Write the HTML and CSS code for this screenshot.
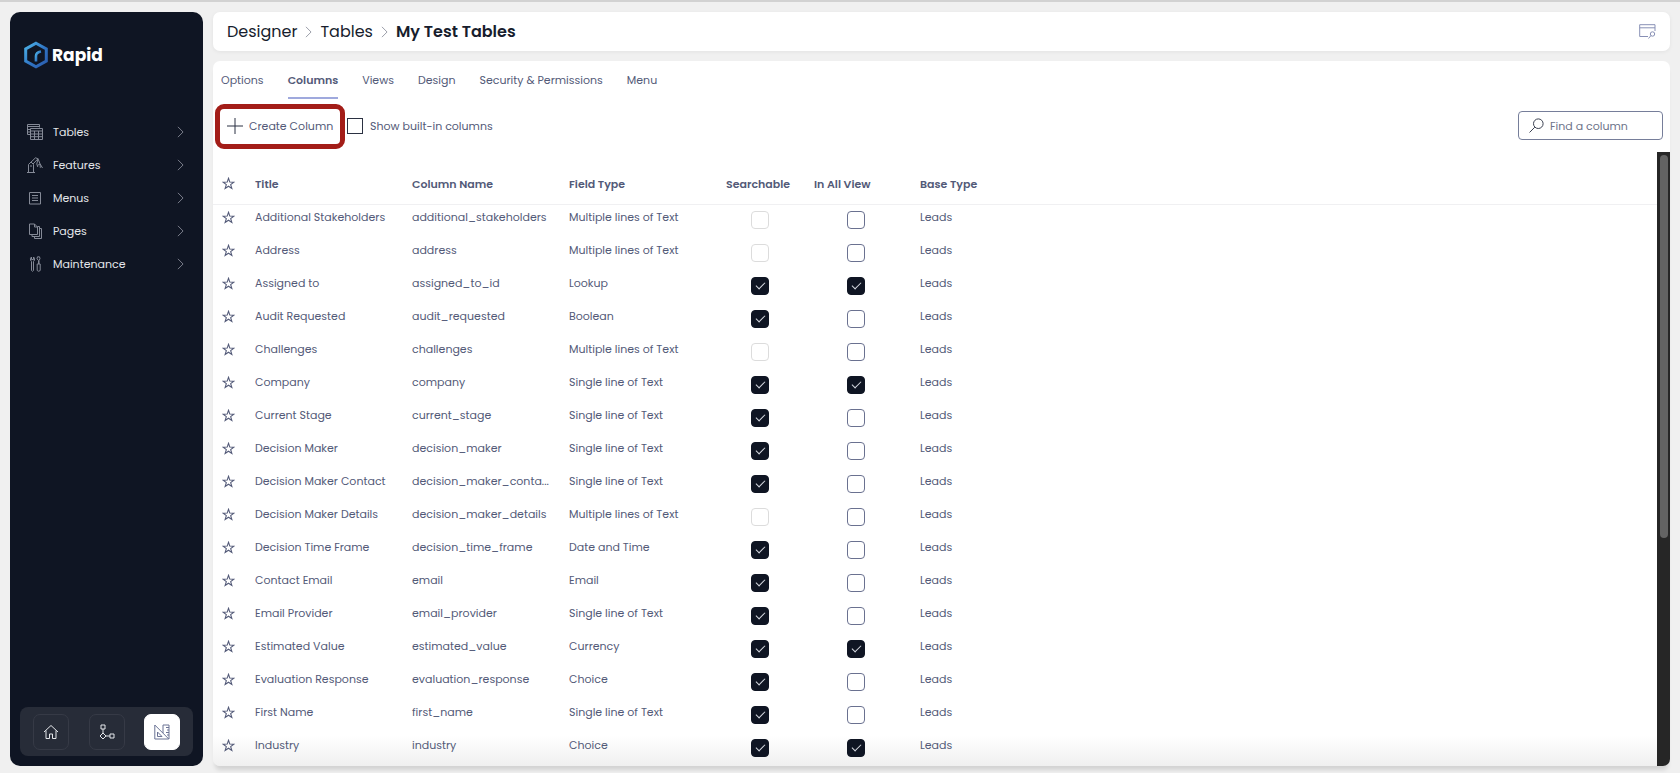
FILE: index.html
```
<!DOCTYPE html>
<html lang="en">
<head>
<meta charset="utf-8">
<title>Rapid – My Test Tables</title>
<link rel="stylesheet" href="styles.css">
</head>
<body>
<svg class="defs" width="0" height="0" aria-hidden="true">
  <symbol id="chevron" viewBox="0 0 8 14"><path d="M1 1l6 6-6 6"/></symbol>
  <symbol id="star" viewBox="0 0 12 12"><path d="M6 1.200l1.200 3.500 3.700.1-2.900 2.200 1.100 3.500L6 8.500l-3.100 2 1.100-3.500L1.100 4.800l3.700-.1z"/></symbol>
</svg>
<div class="app">
  <aside class="sidebar">
    <a class="logo" href="#">
      <svg width="24" height="28" viewBox="0 0 24 28" fill="none">
        <defs><linearGradient id="lg" x1="0" y1="0" x2="1" y2="1"><stop offset="0" stop-color="#4db4e8"/><stop offset=".55" stop-color="#2f74c4"/><stop offset="1" stop-color="#2b5cae"/></linearGradient></defs>
        <path d="M12 2.200L22.300 8v12L12 25.800 1.700 20V8z" stroke="url(#lg)" stroke-width="3"/>
        <path d="M12 20.500v-5.500q0-3.500 5-4.500" stroke="url(#lg)" stroke-width="2.600"/>
      </svg>
      <span>Rapid</span>
    </a>
    <nav class="menu">
      <a href="#"><svg class="ico" viewBox="0 0 16 16"><path d="M3.500 10.500h-3v-10h12v3M.5 2.500h12M.5 5.500h3M.5 8h3M3.500 4.500h12v11h-12zM3.500 7h12M3.500 10h12M3.500 12.700h12M7.500 7v8.500M11.500 7v8.500"/></svg><span>Tables</span><svg class="chev"><use href="#chevron"/></svg></a>
      <a href="#"><svg class="ico" viewBox="0 0 16 16"><path d="M0 15.500h8M1.500 15.500V7.500L4 5l2.500 2.500v8M3 9h2M2.500 6.500L8.500.8l2.500 1L6 7M11 1.800l2 5 2.500 4.200M11 1.800L9.800 7l1 3M13 6.800l-2.500 1.700M13 6.800l.3 4"/></svg><span>Features</span><svg class="chev"><use href="#chevron"/></svg></a>
      <a href="#"><svg class="ico" viewBox="0 0 16 16"><path d="M2.500 2.500h11v11.500h-11zM5 5.500h6M5 8h6M5 10.500h6"/></svg><span>Menus</span><svg class="chev"><use href="#chevron"/></svg></a>
      <a href="#"><svg class="ico" viewBox="0 0 16 16"><path d="M2.500 1h5l3 3v7.500h-8zM7.500 1v3h3M10.500 3.500h2v10h-7.500v-2M12.500 5.500h2v10H7.500v-2"/></svg><span>Pages</span><svg class="chev"><use href="#chevron"/></svg></a>
      <a href="#"><svg class="ico" viewBox="0 0 16 16"><path d="M4.500 1v2.500h2V1Q8 2 7.500 4L6.500 5.500v9q-1 1.500-2 0v-9L3.500 4Q3 2 4.500 1zM10.500.8h2l.5 2-1 1.700v3.500M10.500.8l-.5 2 1.500 1.700V8M10.200 8h3v6.500q-1.500 1.500-3 0z"/></svg><span>Maintenance</span><svg class="chev"><use href="#chevron"/></svg></a>
    </nav>
    <div class="dock">
      <button type="button" aria-label="Home"><svg viewBox="0 0 16 16"><path d="M1 8l7-6.500L15 8M3 6.500v8h3.500V10h3v4.500H13v-8"/></svg></button>
      <button type="button" aria-label="Workflow"><svg viewBox="0 0 16 16"><path d="M2 1h4v4H2zM4 5v4M4 9l3 3-3 3-3-3zM7 12h4M11 10h4v4h-4z"/></svg></button>
      <button type="button" class="on" aria-label="Designer"><svg viewBox="0 0 16 16"><path d="M.8 1v14h14zM3.500 8v4.500H8zM9 9V1h6v14M15 3.500h-3M15 6h-2M15 8.500h-3M15 11h-2"/></svg></button>
    </div>
  </aside>
  <div class="content">
    <header class="card topbar">
      <nav class="crumbs"><a href="#">Designer</a><svg class="chev"><use href="#chevron"/></svg><a href="#">Tables</a><svg class="chev"><use href="#chevron"/></svg><strong>My Test Tables</strong></nav>
      <button type="button" class="preview" aria-label="Preview"><svg width="17" height="15" viewBox="0 0 17 15"><path d="M9 12.500H.7V.7h15.300V7M.7 3.800h15.300M12 11.500L9.500 14.500"/><circle cx="13.500" cy="10" r="2.200"/></svg></button>
    </header>
    <main class="card panel">
      <nav class="tabs">
        <a href="#">Options</a><a href="#" class="active">Columns</a><a href="#">Views</a><a href="#">Design</a><a href="#">Security &amp; Permissions</a><a href="#">Menu</a>
      </nav>
      <div class="tools">
        <button type="button" class="create"><svg width="16" height="16" viewBox="0 0 16 16"><path d="M8 0v16M0 8h16"/></svg>Create Column</button>
        <label class="builtin"><input type="checkbox">Show built-in columns</label>
        <label class="search"><svg width="15" height="15" viewBox="0 0 15 15"><circle cx="9.300" cy="5.700" r="4.800"/><path d="M5.800 9.200L.5 14.500"/></svg><input type="text" placeholder="Find a column" aria-label="Find a column"></label>
      </div>
      <div class="grid">
        <div class="scroll">
          <table>
            <colgroup><col class="c-star"><col class="c-text"><col class="c-text"><col class="c-text"><col class="c-search"><col class="c-view"><col></colgroup>
            <thead><tr><th><svg class="star"><use href="#star"/></svg></th><th>Title</th><th>Column Name</th><th>Field Type</th><th>Searchable</th><th>In All View</th><th>Base Type</th></tr></thead>
            <tbody id="rows"></tbody>
          </table>
        </div>
        <div class="bar"><div class="thumb"></div></div>
      </div>
    </main>
  </div>
</div>
<script src="app.js"></script>
</body>
</html>
```
FILE: app.js
```
const M = "Multiple lines of Text", S = "Single line of Text";
// title, column name, field type, searchable, in all view
const columns = [
  ["Additional Stakeholders", "additional_stakeholders", M, 0, 0],
  ["Address", "address", M, 0, 0],
  ["Assigned to", "assigned_to_id", "Lookup", 1, 1],
  ["Audit Requested", "audit_requested", "Boolean", 1, 0],
  ["Challenges", "challenges", M, 0, 0],
  ["Company", "company", S, 1, 1],
  ["Current Stage", "current_stage", S, 1, 0],
  ["Decision Maker", "decision_maker", S, 1, 0],
  ["Decision Maker Contact", "decision_maker_conta...", S, 1, 0],
  ["Decision Maker Details", "decision_maker_details", M, 0, 0],
  ["Decision Time Frame", "decision_time_frame", "Date and Time", 1, 0],
  ["Contact Email", "email", "Email", 1, 0],
  ["Email Provider", "email_provider", S, 1, 0],
  ["Estimated Value", "estimated_value", "Currency", 1, 1],
  ["Evaluation Response", "evaluation_response", "Choice", 1, 0],
  ["First Name", "first_name", S, 1, 0],
  ["Industry", "industry", "Choice", 1, 1]
];
document.getElementById("rows").innerHTML = columns.map(([title, name, type, search, view]) => `
  <tr>
    <td><svg class="star"><use href="#star"/></svg></td>
    <td>${title}</td><td>${name}</td><td>${type}</td>
    <td class="check"><input type="checkbox" aria-label="${title} searchable" ${search ? "checked" : "disabled"}></td>
    <td class="check view"><input type="checkbox" aria-label="${title} in all view" ${view ? "checked" : ""}></td>
    <td>Leads</td>
  </tr>`).join("");
```
FILE: styles.css
```
* { box-sizing: border-box; }
body {
  margin: 0;
  height: 100vh;
  overflow: hidden;
  background: #f0f0f0;
  color: #535a78;
  font: 11px/16px Poppins, Inter, "Open Sans", sans-serif;
}
a { color: inherit; text-decoration: none; }
button, input { font: inherit; color: inherit; }
svg { fill: none; stroke: currentColor; flex: none; }
.defs { position: absolute; }

.app {
  display: flex;
  gap: 10px;
  height: 100%;
  padding: 10px 10px 7px;
  border-top: 2px solid #d2d2d2;
}

.sidebar {
  display: flex;
  flex-direction: column;
  width: 193px;
  flex: none;
  padding: 29px 10px 10px;
  border-radius: 10px;
  background: #0f1523;
  color: #e4e6ea;
}
.logo {
  display: flex;
  align-items: center;
  gap: 4px;
  padding-left: 4px;
  color: #fff;
  font-size: 17px;
  font-weight: 700;
  line-height: 28px;
}
.logo svg { stroke: none; }
.menu { margin-top: 46px; }
.menu a {
  display: flex;
  align-items: center;
  gap: 10px;
  height: 33px;
  padding: 0 9px 0 7px;
}
.menu span { flex: 1; }
.ico { width: 16px; height: 16px; color: #858a97; }
.chev { width: 7px; height: 12px; color: #8b8f9c; }
.dock {
  display: flex;
  justify-content: space-between;
  margin-top: auto;
  padding: 7px 13px 6px;
  border-radius: 8px;
  background: #272c38;
}
.dock button {
  display: grid;
  place-items: center;
  width: 36px;
  height: 36px;
  padding: 0;
  border: 1px solid #363a46;
  border-radius: 7px;
  background: transparent;
  color: #e4e6ea;
}
.dock svg { width: 16px; height: 16px; }
.dock .on { background: #fff; border-color: #fff; color: #6a7294; }

.content {
  display: flex;
  flex-direction: column;
  flex: 1;
  min-width: 0;
  gap: 10px;
}
.card { border-radius: 7px; background: #fff; box-shadow: 0 1px 4px rgba(0, 0, 0, .06); }
.topbar {
  display: flex;
  align-items: center;
  justify-content: space-between;
  padding: 0 14px;
  height: 39px;
}
.crumbs {
  display: flex;
  align-items: center;
  gap: 8px;
  color: #171d2d;
  font-size: 16px;
  line-height: 24px;
}
.crumbs strong { font-weight: 600; }
.preview { display: grid; padding: 0; border: 0; background: none; color: #8890b5; }

.panel {
  display: flex;
  flex-direction: column;
  flex: 1;
  min-height: 0;
  overflow: hidden;
  background: linear-gradient(to top, #f0f0f0, #fff 30px);
  box-shadow: 0 6px 4px -2px rgba(0, 0, 0, .12);
}
.tabs { display: flex; gap: 24px; padding: 11px 8px 0; }
.tabs a { padding-bottom: 9px; border-bottom: 2px solid transparent; }
.tabs .active { border-color: #9fa9dd; font-weight: 600; }

.tools { display: flex; align-items: center; padding: 5px 7px 0 2px; }
.create {
  display: flex;
  align-items: center;
  gap: 6px;
  width: 130px;
  height: 45px;
  padding: 0 0 2px 7px;
  border: 5px solid #a31d18;
  border-radius: 9px;
  background: #fff;
  white-space: nowrap;
}
.create svg { color: #2b3142; }
.builtin { display: flex; align-items: center; gap: 7px; padding: 0 0 2px 2px; }
.builtin input {
  appearance: none;
  width: 16px;
  height: 16px;
  margin: 0;
  border: 1px solid #2b3142;
}
.search {
  display: flex;
  align-items: center;
  gap: 6px;
  width: 145px;
  height: 29px;
  margin: 0 0 2px auto;
  padding: 0 10px;
  border: 1px solid #767e9a;
  border-radius: 4px;
}
.search svg { color: #3c4252; }
.search input { width: 100%; min-width: 0; padding: 0; border: 0; outline: 0; background: none; }
.search input::placeholder { color: #6d738a; opacity: 1; }

.grid { display: flex; flex: 1; min-height: 0; margin-top: 3px; }
.scroll {
  flex: 1;
  min-width: 0;
  overflow: hidden;
}
table { width: 100%; table-layout: fixed; border-collapse: collapse; }
.c-star { width: 34px; }
.c-text { width: 157px; }
.c-search { width: 88px; }
.c-view { width: 106px; }
th, td { padding: 0 8px; text-align: left; white-space: nowrap; }
th { height: 52px; padding-top: 12px; border-bottom: 1px solid #f0f0f2; font-weight: 600; }
td { height: 33px; padding-bottom: 7px; }
th:first-child, td:first-child { padding-left: 9px; }
.star { display: block; width: 13px; height: 13px; }
.check { padding: 0 0 1px 33px; }
.view { padding-left: 41px; }
.check input {
  appearance: none;
  display: grid;
  place-items: center;
  width: 18px;
  height: 18px;
  margin: 0;
  border: 1px solid #6a7190;
  border-radius: 4px;
}
.check input:disabled { border-color: #dcdcdc; }
.check input:checked { border-color: #0f1523; background: #0f1523; }
.check input:checked::after {
  content: "";
  width: 8px;
  height: 4px;
  margin-bottom: 3px;
  border: solid #d5d8e0;
  border-width: 0 0 1px 1px;
  transform: rotate(-45deg);
}
.bar { width: 13px; padding: 3px 2px 3px 3px; background: #262626; }
.thumb { height: 63%; border-radius: 4px; background: #636363; }
```
